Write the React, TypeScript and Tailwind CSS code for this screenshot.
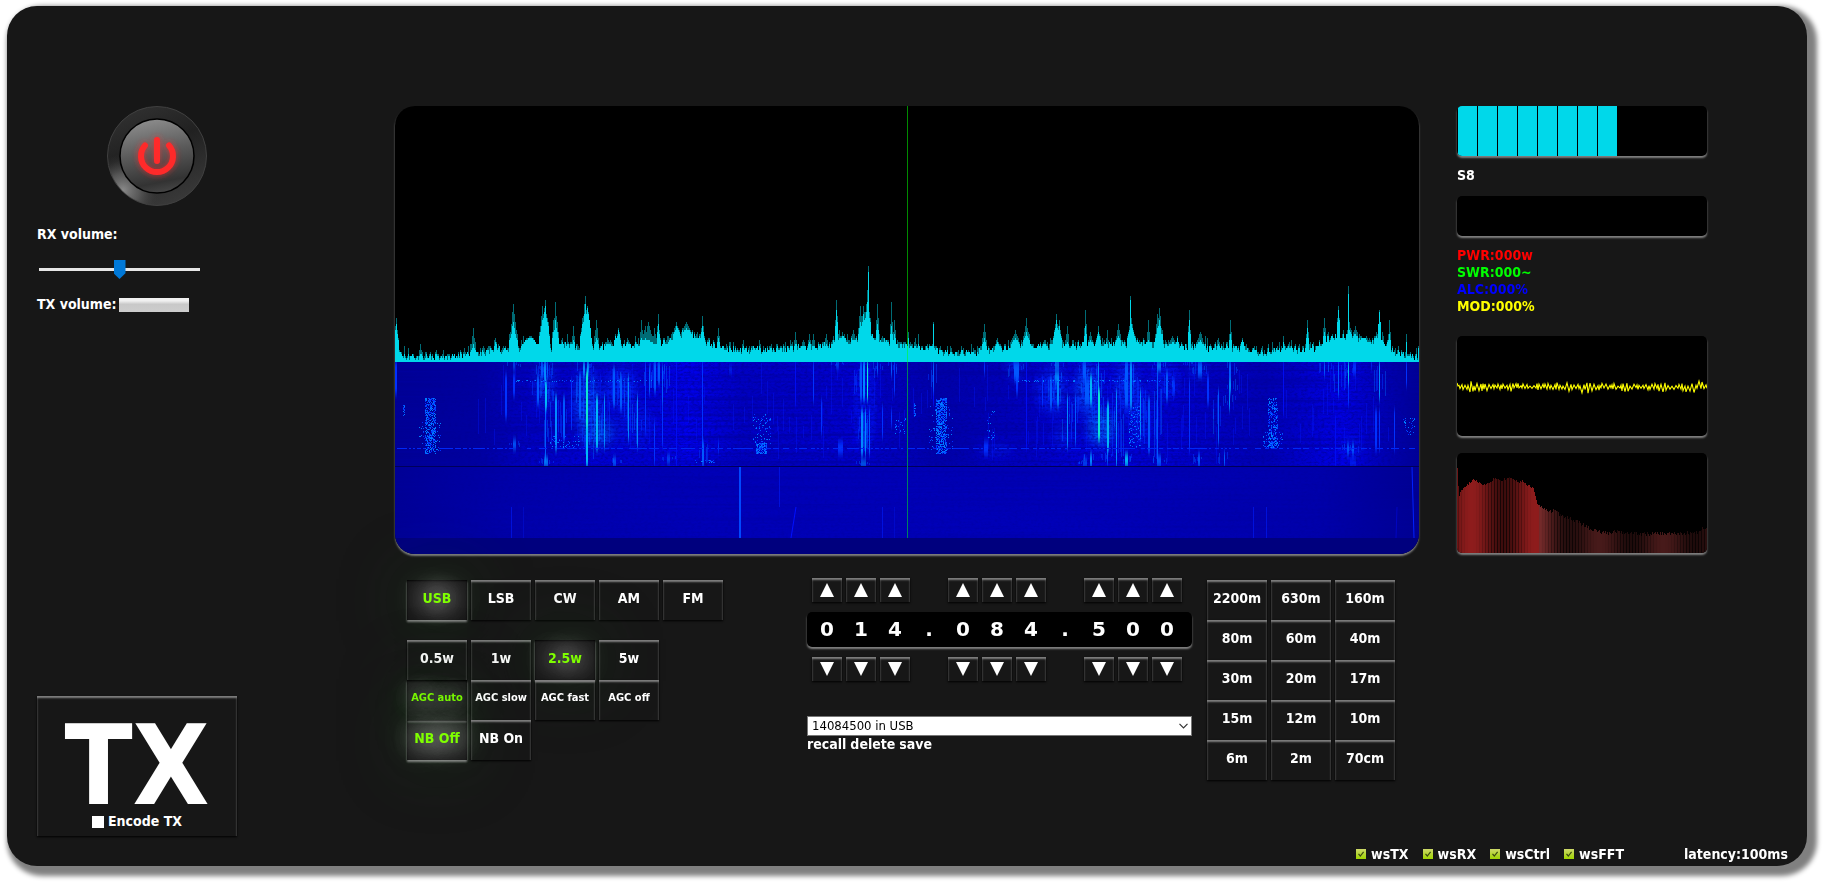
import React, { useMemo, useState } from "react";

/* ---------- helpers ---------- */

function makeRandom(seed: number) {
  let s = seed;
  return () => {
    s = (s * 1664525 + 1013904223) % 4294967296;
    return s / 4294967296;
  };
}

function interpolate(points: number[][], x: number) {
  for (let i = 1; i < points.length; i++) {
    if (x <= points[i][0]) {
      const [x0, y0] = points[i - 1];
      const [x1, y1] = points[i];
      return y0 + ((y1 - y0) * (x - x0)) / (x1 - x0);
    }
  }
  return points[points.length - 1][1];
}

/* ---------- band scope ---------- */

const FLOOR = [
  [0, 14], [6, 8], [14, 6], [58, 5], [62, 7], [80, 8], [100, 13], [122, 13], [128, 16], [135, 23], [141, 15], [148, 20],
  [156, 14], [170, 17], [185, 15], [190, 20], [197, 14], [220, 17], [250, 19], [270, 20], [280, 25], [291, 31], [302, 26],
  [312, 20], [330, 13], [370, 13], [400, 15], [436, 17], [440, 23], [462, 22], [472, 30], [480, 23], [500, 17], [540, 14],
  [548, 9], [580, 10], [600, 13], [620, 17], [650, 16], [690, 17], [735, 19], [760, 18], [790, 15], [830, 15], [868, 10],
  [888, 14], [905, 12], [920, 15], [930, 23], [945, 27], [960, 25], [975, 19], [985, 24], [995, 13], [1010, 7], [1024, 4],
];

/* x, held peak, live level, half width */
const PEAKS = [
  [1, 44, 38, 2], [25, 18, 8, 1], [78, 34, 18, 2], [100, 24, 20, 1], [118, 58, 40, 4], [135, 26, 24, 8], [147, 56, 42, 3],
  [150, 62, 56, 4], [160, 60, 42, 3], [178, 36, 22, 1], [189, 58, 48, 4], [190, 66, 58, 3], [192, 56, 54, 4], [201, 42, 24, 2],
  [212, 24, 18, 2], [220, 28, 26, 1], [223, 34, 32, 2], [246, 42, 24, 1], [250, 36, 24, 3], [253, 40, 22, 4], [259, 34, 18, 1],
  [263, 48, 38, 1], [281, 40, 36, 3], [291, 40, 33, 4], [307, 46, 36, 1], [323, 34, 24, 1], [364, 22, 16, 0], [400, 30, 18, 1],
  [414, 28, 20, 1], [418, 28, 16, 1], [431, 28, 16, 1], [441, 62, 52, 1], [447, 28, 26, 3], [458, 32, 22, 1], [465, 56, 40, 2],
  [468, 56, 47, 3], [472, 72, 60, 3], [473, 96, 90, 0], [482, 58, 38, 1], [496, 60, 36, 1], [499, 42, 28, 1], [513, 30, 24, 0],
  [523, 28, 18, 0], [538, 40, 38, 0], [589, 38, 24, 2], [602, 24, 20, 2], [620, 32, 24, 4], [631, 44, 30, 3], [649, 22, 18, 2],
  [661, 48, 42, 3], [664, 42, 36, 2], [672, 36, 20, 1], [690, 52, 36, 1], [695, 30, 22, 2], [703, 36, 30, 2], [712, 32, 18, 0],
  [723, 38, 26, 2], [735, 66, 62, 0], [736, 44, 38, 4], [753, 42, 22, 1], [762, 48, 34, 2], [764, 54, 42, 3], [777, 26, 20, 3],
  [782, 26, 24, 1], [794, 52, 42, 1], [805, 30, 22, 4], [823, 24, 18, 1], [835, 42, 28, 1], [847, 24, 22, 2], [888, 26, 20, 0],
  [912, 42, 34, 1], [929, 44, 30, 1], [943, 56, 52, 1], [953, 76, 68, 0], [954, 40, 32, 2], [960, 36, 28, 2], [971, 26, 20, 2],
  [981, 30, 26, 2], [984, 52, 50, 1], [994, 42, 28, 1], [1011, 28, 20, 0], [1023, 16, 14, 0],
];

function buildScope() {
  const rnd = makeRandom(11);
  let live = "M0 256";
  let held = "M0 256";
  for (let x = 0; x < 1024; x++) {
    const base = interpolate(FLOOR, x);
    let a = base + (rnd() - 0.6) * 7;
    let b = a + rnd() * rnd() * 9;
    for (const [px, hi, lo, w] of PEAKS) {
      const d = Math.abs(x - px);
      if (d <= w) {
        const f = 1 - (d / (w + 1)) * 0.8 - (d > 0 ? rnd() * 0.15 : 0);
        a = Math.max(a, base + (lo - base) * f);
        b = Math.max(b, base + (hi - base) * f);
      }
    }
    const ya = 256 - Math.max(1, Math.round(a / 2)) * 2;
    const yb = Math.min(ya, 256 - Math.round(b / 2) * 2);
    live += `V${ya}H${x + 1}`;
    held += `V${yb}H${x + 1}`;
  }
  return { live: live + "V256Z", held: held + "V256Z" };
}

/* x, top, bottom, width, strength */
const STREAKS = [
  [0, 256, 288, 2, 2], [118, 256, 262, 2, 3], [118, 269, 290, 2, 2], [118, 334, 343, 3, 3], [110, 269, 312, 2, 2], [142, 270, 298, 2, 3],
  [146, 256, 272, 2, 3], [149, 256, 276, 2, 4], [152, 256, 272, 1, 3], [150, 276, 303, 2, 5], [150, 303, 352, 1, 3], [149, 352, 360, 4, 4],
  [160, 290, 344, 2, 4], [168, 291, 334, 2, 3], [176, 274, 320, 1, 2], [184, 268, 312, 2, 3], [188, 256, 270, 2, 4], [192, 256, 268, 2, 4],
  [191, 266, 326, 2, 6], [191, 320, 360, 2, 5], [201, 291, 343, 2, 5], [209, 290, 342, 1, 4], [218, 262, 300, 2, 3],
  [225, 270, 304, 2, 3], [218, 352, 360, 3, 3], [233, 270, 334, 1, 4], [242, 290, 342, 1, 4], [250, 256, 326, 1, 2], [254, 260, 288, 1, 3],
  [259, 256, 286, 2, 3], [259, 316, 358, 1, 2], [263, 256, 278, 2, 3], [267, 260, 298, 1, 3], [267, 300, 340, 1, 2], [281, 256, 360, 1, 1],
  [307, 256, 360, 1, 2], [307, 336, 360, 2, 3], [323, 336, 346, 1, 2], [272, 350, 356, 3, 3], [334, 262, 266, 3, 2], [400, 256, 300, 1, 1],
  [418, 256, 296, 1, 2], [426, 294, 328, 1, 2], [441, 256, 261, 3, 3], [443, 336, 348, 5, 2], [465, 256, 294, 2, 3], [468, 256, 294, 2, 4],
  [472, 256, 294, 1, 6], [466, 304, 349, 2, 4], [470, 304, 349, 1, 4], [474, 304, 349, 1, 3], [466, 355, 360, 5, 4], [482, 256, 268, 1, 3],
  [487, 300, 332, 1, 2], [496, 256, 270, 1, 3], [499, 256, 288, 1, 2], [496, 304, 320, 1, 2], [538, 256, 284, 1, 3], [538, 284, 300, 1, 1],
  [589, 256, 268, 1, 2], [589, 336, 348, 4, 2], [619, 256, 274, 5, 3], [621, 274, 288, 2, 2], [631, 256, 344, 1, 1], [647, 272, 300, 1, 2],
  [655, 272, 302, 2, 3], [660, 256, 262, 4, 4], [660, 266, 276, 4, 4], [662, 276, 300, 2, 4], [672, 290, 342, 1, 4], [680, 290, 338, 1, 3],
  [688, 256, 274, 3, 3], [690, 274, 298, 4, 3], [695, 270, 298, 2, 5], [703, 256, 296, 1, 4], [703, 284, 334, 2, 6], [712, 297, 344, 2, 5],
  [712, 344, 358, 1, 3], [695, 348, 360, 2, 4], [688, 354, 360, 4, 3], [721, 284, 360, 1, 4], [730, 256, 300, 3, 3],
  [730, 348, 360, 3, 5], [735, 256, 302, 2, 4], [745, 284, 332, 1, 4], [753, 292, 346, 2, 3], [762, 256, 264, 4, 4], [762, 266, 360, 1, 3],
  [762, 350, 360, 4, 3], [771, 266, 294, 2, 3], [778, 274, 288, 2, 2], [794, 256, 260, 1, 3], [794, 274, 345, 1, 2], [803, 256, 270, 4, 3],
  [803, 348, 360, 2, 3], [812, 270, 298, 2, 2], [823, 284, 338, 1, 3], [834, 256, 272, 2, 3], [834, 273, 287, 2, 4], [834, 288, 304, 1, 4],
  [829, 346, 360, 1, 3], [888, 256, 310, 1, 1], [929, 256, 270, 1, 3], [943, 256, 290, 1, 3], [953, 256, 276, 1, 5], [953, 276, 300, 1, 2],
  [958, 256, 268, 3, 2], [952, 338, 348, 2, 3], [957, 338, 348, 2, 3], [976, 256, 262, 1, 2], [984, 256, 294, 1, 4], [980, 304, 344, 2, 2],
  [984, 304, 344, 1, 2], [999, 304, 344, 1, 2], [1011, 256, 280, 1, 2], [955, 355, 359, 6, 2], [940, 310, 360, 1, 1],
];

const STREAK_FILL = ["#0000d8", "#0010f0", "#0030ff", "#0058ff", "#0088ff", "#00b8f8", "#10e8d0"];

/* soft bright areas: cx, cy, rx, ry, fill, opacity */
const HAZE: [number, number, number, number, string, number][] = [
  [192, 298, 12, 34, "#0050ff", 0.8], [202, 326, 16, 12, "#0070ff", 0.8], [150, 278, 9, 22, "#0040ff", 0.7], [226, 282, 16, 18, "#0030ff", 0.7],
  [240, 320, 20, 20, "#0020ff", 0.4], [470, 300, 12, 50, "#0018ff", 0.6],
  [661, 284, 8, 24, "#0040ff", 0.7], [651, 284, 10, 20, "#0028ff", 0.6], [692, 284, 12, 24, "#0050ff", 0.8], [706, 322, 14, 16, "#0078ff", 0.8],
  [732, 282, 12, 26, "#0038ff", 0.7], [745, 310, 10, 30, "#0028ff", 0.6], [668, 330, 10, 10, "#0038ff", 0.5],
  [770, 275, 14, 18, "#0020ff", 0.6], [956, 342, 12, 8, "#0020ff", 0.6], [600, 344, 20, 8, "#0010ff", 0.5],
  [803, 264, 8, 8, "#0040ff", 0.5], [620, 262, 7, 10, "#0038ff", 0.6],
];

/* x, top, width, height, density */
const SPECKLES = [
  [30, 292, 11, 56, 0.5], [24, 316, 22, 30, 0.08], [361, 337, 11, 11, 0.7], [358, 308, 18, 30, 0.14], [541, 292, 11, 56, 0.55],
  [534, 300, 24, 44, 0.1], [873, 292, 10, 50, 0.4], [868, 326, 20, 16, 0.15], [734, 300, 12, 42, 0.22], [592, 304, 8, 30, 0.1],
  [8, 299, 2, 12, 0.5], [519, 297, 2, 14, 0.5], [155, 330, 30, 12, 0.12], [500, 312, 12, 18, 0.12], [1008, 312, 12, 18, 0.18],
  [120, 274, 60, 2, 0.2], [190, 274, 70, 2, 0.2], [620, 274, 60, 2, 0.25], [690, 274, 90, 2, 0.25], [300, 354, 20, 3, 0.2],
];

function buildWaterfall() {
  const rnd = makeRandom(5);
  const speckle = ["", "", ""];
  for (const [x, y, w, h, density] of SPECKLES) {
    for (let yy = y; yy < y + h; yy += 1) {
      for (let xx = x; xx < x + w; xx += 1) {
        if (rnd() < density) speckle[Math.floor(rnd() * 3)] += `M${xx} ${yy}h1v1h-1z`;
      }
    }
  }
  let dash = "";
  for (let x = 0; x < 1024; x += 2) if (rnd() < 0.65) dash += `M${x} 342h2v1h-2z`;
  let columns = "";
  for (let i = 0; i < 130; i++) {
    const x = Math.floor(80 + rnd() * 920);
    const y = Math.floor(256 + rnd() * 70);
    columns += `M${x} ${y}h1v${Math.floor(12 + rnd() * 26)}h-1z`;
  }
  const side = ["", ""];
  for (const [x, y0, y1, w, level] of STREAKS) {
    if (level < 3) continue;
    for (let k = 0; k < 5; k++) {
      const dx = Math.round((rnd() - 0.5) * 12);
      const top = y0 + Math.floor(rnd() * (y1 - y0) * 0.5);
      const len = Math.max(2, Math.floor((y1 - top) * (0.3 + rnd() * 0.6)));
      side[k % 2] += `M${x + dx + (dx > 0 ? w : 0)} ${top}h1v${len}h-1z`;
    }
  }
  return { speckle, dash, columns, side };
}

function BandScope() {
  const scope = useMemo(buildScope, []);
  const fall = useMemo(buildWaterfall, []);
  return (
    <svg
      role="img"
      aria-label="Spectrum and waterfall"
      viewBox="0 0 1024 448"
      preserveAspectRatio="none"
      className="block h-[448px] w-full rounded-[20px] bg-black shadow-[0_2px_2px_gray]"
    >
      <defs>
        <linearGradient id="fallBase" x1="0" x2="1" y1="0" y2="0">
          <stop offset="0" stopColor="#000094" />
          <stop offset="0.08" stopColor="#0000a0" />
          <stop offset="0.13" stopColor="#0000c4" />
          <stop offset="0.19" stopColor="#0000d4" />
          <stop offset="0.24" stopColor="#0000d4" />
          <stop offset="0.285" stopColor="#0000ee" />
          <stop offset="0.34" stopColor="#0000c4" />
          <stop offset="0.45" stopColor="#0000d0" />
          <stop offset="0.53" stopColor="#0000aa" />
          <stop offset="0.6" stopColor="#0000bc" />
          <stop offset="0.68" stopColor="#0000dc" />
          <stop offset="0.76" stopColor="#0000d0" />
          <stop offset="0.85" stopColor="#0000b4" />
          <stop offset="0.925" stopColor="#0000e6" />
          <stop offset="0.97" stopColor="#0000b2" />
          <stop offset="1" stopColor="#000094" />
        </linearGradient>
        <linearGradient id="quietBase" x1="0" x2="1" y1="0" y2="0">
          <stop offset="0" stopColor="#000096" />
          <stop offset="0.12" stopColor="#0000ac" />
          <stop offset="0.3" stopColor="#0000b8" />
          <stop offset="0.7" stopColor="#0000b8" />
          <stop offset="0.9" stopColor="#0000ac" />
          <stop offset="1" stopColor="#000092" />
        </linearGradient>
        <filter id="grain" x="0" y="0" width="1" height="1">
          <feTurbulence type="fractalNoise" baseFrequency="0.3 0.5" numOctaves="2" seed="4" />
          <feColorMatrix values="0 0 0 0 0  0 0 0 0 0  0 0 0 0 0.3  2.4 0 0 0 -1" />
        </filter>
        <filter id="rows" x="0" y="0" width="1" height="1">
          <feTurbulence type="fractalNoise" baseFrequency="0.004 0.4" numOctaves="2" seed="9" />
          <feColorMatrix values="0 0 0 0 0  0 0 0 0 0  0 0 0 0 0.35  2.6 0 0 0 -1.1" />
        </filter>
        <filter id="glow" x="-0.05" y="-0.1" width="1.1" height="1.2">
          <feGaussianBlur stdDeviation="5 7" />
        </filter>
        <filter id="soften" x="-0.05" y="-0.1" width="1.1" height="1.2">
          <feGaussianBlur stdDeviation="0.4 3" />
        </filter>
        <clipPath id="fallClip">
          <rect x="0" y="256" width="1024" height="104" />
        </clipPath>
      </defs>
      <path d={scope.held} fill="#006b75" shapeRendering="crispEdges" />
      <path d={scope.live} fill="#00d8ea" shapeRendering="crispEdges" />
      <rect y="256" width="1024" height="104" fill="url(#fallBase)" />
      <rect y="361" width="1024" height="71" fill="url(#quietBase)" />
      <g clipPath="url(#fallClip)">
        <g filter="url(#glow)">
          {HAZE.map(([cx, cy, rx, ry, fill, opacity], i) => (
            <ellipse key={i} cx={cx} cy={cy} rx={rx} ry={ry} fill={fill} opacity={opacity} />
          ))}
        </g>
        <rect y="256" width="1024" height="104" filter="url(#grain)" opacity="0.7" />
        <rect y="256" width="1024" height="104" filter="url(#rows)" opacity="0.7" />
        <g shapeRendering="crispEdges">
          <path d={fall.columns} fill="#0018ff" opacity="0.35" />
          <path d={fall.side[0]} fill="#0038ff" opacity="0.5" />
          <path d={fall.side[1]} fill="#0068ff" opacity="0.4" />
        </g>
        <g filter="url(#soften)">
          {STREAKS.map(([x, y0, y1, w, level], i) => (
            <rect key={i} x={x} y={y0} width={w} height={y1 - y0} fill={STREAK_FILL[level]} />
          ))}
        </g>
        <g shapeRendering="crispEdges">
          <path d={fall.speckle[0]} fill="#0030ff" />
          <path d={fall.speckle[1]} fill="#0054ff" />
          <path d={fall.speckle[2]} fill="#0080ff" />
          <path d={fall.dash} fill="#0028f8" />
        </g>
      </g>
      <rect y="361" width="1024" height="71" filter="url(#grain)" opacity="0.3" />
      <rect y="361" width="1024" height="71" filter="url(#rows)" opacity="0.35" />
      <rect y="360" width="1024" height="1" fill="#00005a" />
      <rect y="432" width="1024" height="16" fill="#00007e" />
      <g fill="none" stroke="#0018f0" shapeRendering="crispEdges">
        <path d="M345 361v71" stroke="#0048ff" strokeWidth="2" />
        <path d="M384.500 361v40M116.500 401v31M487.500 401v31M858.500 401v31M871.500 401v31" opacity="0.7" />
        <path d="M128.500 401v31M499.500 401v31" opacity="0.35" />
      </g>
      <path d="M401 401L396 432" stroke="#0010ff" fill="none" />
      <path d="M1017 361L1019 432" stroke="#0020ff" fill="none" />
      <path d="M1002 401L1001 432" stroke="#0008e0" fill="none" opacity="0.6" />
      <rect x="512" width="1" height="256" fill="#008a00" />
      <rect x="512" y="240" width="1" height="16" fill="#00ee78" />
      <rect x="512" y="256" width="1" height="176" fill="#008060" />
    </svg>
  );
}

/* ---------- audio scopes ---------- */

function AudioWave() {
  const d = useMemo(() => {
    const rnd = makeRandom(21);
    let path = "M0 47L1 50";
    let sign = 1;
    for (let x = 2; x <= 250; x += rnd() < 0.4 ? 1 : 2) {
      const burst = 0.75 + 0.35 * Math.sin(x / 9) * Math.sin(x / 17);
      sign = -sign;
      path += `L${x} ${(51 + sign * (1 + rnd() * 5) * burst).toFixed(1)}`;
    }
    return path;
  }, []);
  return (
    <svg role="img" aria-label="Audio waveform" viewBox="0 0 250 100" preserveAspectRatio="none" className="block h-[100px] w-full rounded-[5px] bg-black shadow-[0_2px_2px_gray]">
      <path d={d} fill="none" stroke="#ffff00" strokeWidth="1.100" />
    </svg>
  );
}

const AUDIO_LEVELS = [
  [0, 86], [1, 68], [2, 57], [4, 63], [10, 68], [16, 73], [22, 71], [25, 67], [32, 71], [38, 75], [44, 73], [54, 76], [60, 71],
  [65, 72], [70, 68], [76, 65], [80, 50], [85, 45], [92, 41], [98, 43], [102, 38], [110, 36], [120, 31], [128, 27], [136, 23],
  [145, 20], [152, 20], [160, 22], [172, 20], [190, 19], [240, 20], [243, 24], [249, 25],
];

function AudioSpectrum() {
  const bars = useMemo(() => {
    const rnd = makeRandom(33);
    return Array.from({ length: 250 }, (_, x) => {
      const h = Math.round(interpolate(AUDIO_LEVELS, x) + (rnd() - 0.5) * (x > 90 ? 4 : 2.5));
      const swell = 0.5 + 0.5 * Math.cos(((x - 14) * Math.PI * 2) / 64);
      const fade = x < 82 ? 1 : Math.max(0.5, 0.85 - (x - 82) / 120);
      const flicker = x % 3 === 1 ? 0.35 + 0.65 * swell : 1;
      const r = Math.round((62 + 80 * swell) * fade * flicker);
      const g = Math.round(x < 82 ? r * 0.2 : r * 0.36);
      return { x, h, fill: `rgb(${r},${g},${g})` };
    });
  }, []);
  return (
    <svg role="img" aria-label="Audio spectrum" viewBox="0 0 250 100" preserveAspectRatio="none" shapeRendering="crispEdges" className="block h-[100px] w-full rounded-[5px] bg-black shadow-[0_2px_2px_gray]">
      {bars.map((b) => (
        <rect key={b.x} x={b.x} y={100 - b.h} width="1" height={b.h} fill={b.fill} />
      ))}
    </svg>
  );
}

/* ---------- controls ---------- */

const RAISED = "shadow-[inset_0_2px_2px_gray,0_1px_2px_black]";
const PRESSED =
  "text-[#7fff00] shadow-[inset_0_1px_2px_black,0_2px_2px_gray,0_0_70px_#30503066] [text-shadow:0_0_24px_#ffffff,0_0_30px_#ffffff,0_0_50px_#c8d8c0,0_0_90px_#60a060]";

function KeyButton({ label, on = false, small = false, onClick }: { label: string; on?: boolean; small?: boolean; onClick?: () => void }) {
  return (
    <button
      type="button"
      aria-pressed={on}
      onClick={onClick}
      className={`h-[40px] w-[60px] pb-1 text-center whitespace-nowrap ${small ? "text-[11px]" : "text-[14px]"} ${on ? PRESSED : RAISED}`}
    >
      {label}
    </button>
  );
}

function KeyRow({ labels, initial, small }: { labels: string[]; initial: string; small?: boolean }) {
  const [value, setValue] = useState(initial);
  return (
    <div className="flex gap-1">
      {labels.map((l) => (
        <KeyButton key={l} label={l} small={small} on={l === value} onClick={() => setValue(l)} />
      ))}
    </div>
  );
}

const DIGITS = ["0", "1", "4", ".", "0", "8", "4", ".", "5", "0", "0"];

function StepRow({ up }: { up: boolean }) {
  return (
    <div className="flex pl-[3px]">
      {DIGITS.map((d, i) => (
        <div key={i} className="flex w-[34px] justify-center">
          {d !== "." && (
            <button type="button" aria-label={`${up ? "Increase" : "Decrease"} digit ${i + 1}`} className={`flex h-[24px] w-[30px] items-center justify-center ${RAISED}`}>
              <svg viewBox="0 0 14 14" className="h-[14px] w-[14px] fill-white">
                <path d={up ? "M7 0L14 14H0z" : "M0 0H14L7 14z"} />
              </svg>
            </button>
          )}
        </div>
      ))}
    </div>
  );
}

function Frequency() {
  return (
    <div className="w-[385px]">
      <StepRow up />
      <output className="mt-[10px] flex h-[35px] rounded-[5px] bg-black pl-[3px] font-['DejaVu_Sans',sans-serif] text-[20px] leading-[34px] shadow-[0_2px_2px_gray]">
        {DIGITS.map((d, i) => (
          <span key={i} className="w-[34px] text-center">
            {d}
          </span>
        ))}
      </output>
      <div className="mt-[10px]">
        <StepRow up={false} />
      </div>
      <div className="mt-[35px] grid">
        <select
          aria-label="Stored frequencies"
          className="col-start-1 row-start-1 h-[20px] w-full appearance-none rounded-none border border-[#767676] bg-white pl-1 text-[13px] leading-[18px] font-normal text-black"
        >
          <option>14084500 in USB</option>
        </select>
        <svg viewBox="0 0 9 6" className="pointer-events-none col-start-1 row-start-1 mr-[4px] h-[6px] w-[9px] self-center justify-self-end fill-none stroke-[#333333]">
          <path d="M0.500 0.800L4.500 4.800L8.500 0.800" strokeWidth="1.200" />
        </svg>
      </div>
      <div className="flex gap-1 leading-[17px]">
        <button type="button">recall</button>
        <button type="button">delete</button>
        <button type="button">save</button>
      </div>
    </div>
  );
}

const BANDS = ["2200m", "630m", "160m", "80m", "60m", "40m", "30m", "20m", "17m", "15m", "12m", "10m", "6m", "2m", "70cm"];

function PowerButton() {
  return (
    <button type="button" aria-label="Power" className="h-[100px] w-[100px] rounded-full">
      <svg viewBox="0 0 100 100" className="block h-full w-full">
        <defs>
          <linearGradient id="ring" x1="0.3" y1="0" x2="0.7" y2="1">
            <stop offset="0" stopColor="#303030" />
            <stop offset="0.4" stopColor="#212121" />
            <stop offset="1" stopColor="#3a3a3a" />
          </linearGradient>
          <radialGradient id="shine" gradientUnits="userSpaceOnUse" cx="16" cy="84" r="36">
            <stop offset="0" stopColor="#8a8a8a" />
            <stop offset="0.45" stopColor="#6a6a6a" stopOpacity="0.7" />
            <stop offset="1" stopColor="#3a3a3a" stopOpacity="0" />
          </radialGradient>
          <linearGradient id="cap" x1="0.4" y1="0" x2="0.6" y2="1">
            <stop offset="0" stopColor="#8c8c8c" />
            <stop offset="0.45" stopColor="#5a5a5a" />
            <stop offset="0.85" stopColor="#333333" />
            <stop offset="1" stopColor="#484848" />
          </linearGradient>
          <filter id="redGlow" x="-0.5" y="-0.5" width="2" height="2">
            <feGaussianBlur stdDeviation="3" />
          </filter>
        </defs>
        <circle cx="50" cy="50" r="49.500" fill="url(#ring)" stroke="#404040" />
        <circle cx="50" cy="50" r="49" fill="url(#shine)" />
        <circle cx="50" cy="50" r="37" fill="url(#cap)" stroke="#000000" strokeWidth="1.500" />
        <g fill="none" stroke="#ff2a2a" strokeWidth="6" strokeLinecap="round">
          <g filter="url(#redGlow)" opacity="0.7">
            <path d="M38 39.500A16 16 0 1 0 62 39.500M50 34V55" />
          </g>
          <path d="M38 39.500A16 16 0 1 0 62 39.500M50 34V55" />
        </g>
      </svg>
    </button>
  );
}

function LeftPanel() {
  return (
    <div className="flex w-[358px] shrink-0 flex-col justify-between">
      <div>
        <div className="flex w-[240px] justify-center">
          <PowerButton />
        </div>
        <label htmlFor="rx" className="mt-5 block leading-[17px]">
          RX volume:
        </label>
        <input
          id="rx"
          type="range"
          defaultValue={50}
          className="mt-[17px] ml-[2px] block h-[19px] w-[161px] appearance-none bg-transparent [&::-webkit-slider-runnable-track]:h-[3px] [&::-webkit-slider-runnable-track]:bg-[#e6e6e6] [&::-webkit-slider-thumb]:mt-[-8px] [&::-webkit-slider-thumb]:h-[19px] [&::-webkit-slider-thumb]:w-[12px] [&::-webkit-slider-thumb]:appearance-none [&::-webkit-slider-thumb]:bg-[#0078d7] [&::-webkit-slider-thumb]:[clip-path:polygon(0_0,100%_0,100%_70%,50%_100%,0_70%)]"
        />
        <div className="mt-[17px] flex items-center gap-[2px] leading-[17px]">
          <span id="txv">TX volume:</span>
          <span role="meter" aria-labelledby="txv" aria-valuenow={0} className="h-[14px] w-[70px] bg-linear-to-b from-[#f0f0f0] from-20% via-[#c8c8c8] via-45% to-[#cdcdcd]" />
        </div>
      </div>
      <div className={`flex h-[140px] w-[200px] flex-col items-center pt-[21px] ${RAISED}`}>
        <button type="button" className="h-[96px] text-[111px] leading-[98px]">
          TX
        </button>
        <label className="flex items-center gap-1 leading-[17px]">
          <input type="checkbox" className="h-[12px] w-[12px] appearance-none bg-white" />
          Encode TX
        </label>
      </div>
    </div>
  );
}

function RightPanel() {
  return (
    <div className="mr-[100px] w-[250px] shrink-0">
      <div role="meter" aria-label="Signal" aria-valuenow={8} className="flex h-[50px] gap-px overflow-hidden rounded-[5px] bg-black pl-px shadow-[0_2px_2px_gray]">
        {Array.from({ length: 8 }, (_, i) => (
          <span key={i} className="w-[19px] bg-[#00d8ea]" />
        ))}
      </div>
      <p className="mt-[11px] leading-[17px]">S8</p>
      <div className="mt-3 h-[40px] rounded-[5px] bg-black shadow-[0_2px_2px_gray]" />
      <div className="mt-[11px] leading-[17px]">
        <p className="text-[#ff0000]">PWR:000w</p>
        <p className="text-[#00ff00]">SWR:000~</p>
        <p className="text-[#0000ff]">ALC:000%</p>
        <p className="text-[#ffff00]">MOD:000%</p>
      </div>
      <div className="mt-[21px] flex flex-col gap-[17px]">
        <AudioWave />
        <AudioSpectrum />
      </div>
    </div>
  );
}

function StatusIcon() {
  return (
    <svg viewBox="0 0 10 10" className="h-[10px] w-[10px]">
      <defs>
        <linearGradient id="statusFill" x1="0" y1="0" x2="0" y2="1">
          <stop offset="0" stopColor="#cdd86a" />
          <stop offset="1" stopColor="#9fd400" />
        </linearGradient>
      </defs>
      <rect width="10" height="10" fill="url(#statusFill)" />
      <path d="M2.500 4.800L4.300 7L7.600 2.800" fill="none" stroke="#3c4a10" strokeWidth="1.200" />
    </svg>
  );
}

export default function App() {
  return (
    <div className="overflow-hidden bg-white pt-[6px] pr-[17px] pb-4 pl-[7px]">
      <main className="flex flex-col rounded-[30px] bg-[#171717] pt-[100px] pl-[30px] font-['DejaVu_Sans_Condensed','DejaVu_Sans',sans-serif] text-[14px] font-bold text-white shadow-[5px_5px_5px_5px_gray]">
        <div className="flex min-h-[730px]">
          <LeftPanel />
          <div className="min-w-0 flex-1">
            <BandScope />
            <div className="flex pt-6 pl-3">
              <div className="w-[400px] shrink-0 pt-[2px]">
                <KeyRow labels={["USB", "LSB", "CW", "AM", "FM"]} initial="USB" />
                <div className="mt-5">
                  <KeyRow labels={["0.5w", "1w", "2.5w", "5w"]} initial="2.5w" />
                  <KeyRow labels={["AGC auto", "AGC slow", "AGC fast", "AGC off"]} initial="AGC auto" small />
                  <KeyRow labels={["NB Off", "NB On"]} initial="NB Off" />
                </div>
              </div>
              <div className="w-[400px] shrink-0">
                <Frequency />
              </div>
              <div className="grid grid-cols-[60px_60px_60px] gap-x-1 pt-[2px]">
                {BANDS.map((b) => (
                  <KeyButton key={b} label={b} />
                ))}
              </div>
            </div>
          </div>
          <div className="w-[38px] shrink-0" />
          <RightPanel />
        </div>
        <footer className="flex h-[30px] items-center justify-end pt-[6px] pr-[19px] leading-[17px]">
          <ul className="flex gap-[14px]">
            {["wsTX", "wsRX", "wsCtrl", "wsFFT"].map((s) => (
              <li key={s} className="flex items-center gap-[5px]">
                <StatusIcon />
                {s}
              </li>
            ))}
          </ul>
          <span className="ml-[60px]">latency:100ms</span>
        </footer>
      </main>
    </div>
  );
}
